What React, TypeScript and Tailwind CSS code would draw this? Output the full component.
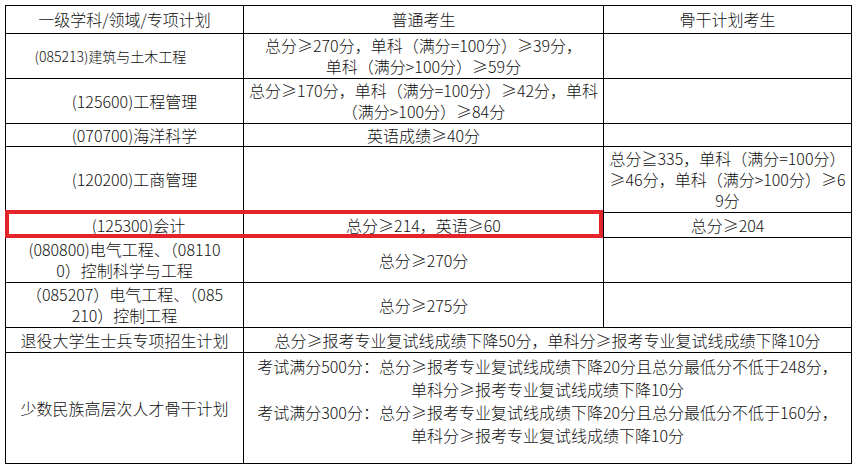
const td = 'border border-black p-0 text-center align-middle whitespace-nowrap'

type Row = {
  h: string
  name: React.ReactNode
  nameCls?: string
  normal?: React.ReactNode
  normalCls?: string
  backbone?: React.ReactNode
  span?: boolean
}

const rows: Row[] = [
  {
    h: 'h-[45px]',
    name: '(085213)建筑与土木工程',
    nameCls: 'text-[14px] pr-[28px]',
    normal: (
      <>
        总分≥270分，单科（满分=100分）≥39分，
        <br />
        单科（满分&gt;100分）≥59分
      </>
    ),
  },
  {
    h: 'h-[45px]',
    name: '(125600)工程管理',
    nameCls: 'pl-[20px]',
    normal: (
      <>
        总分≥170分，单科（满分=100分）≥42分，单科
        <br />
        （满分&gt;100分）≥84分
      </>
    ),
  },
  { h: 'h-[23px]', name: '(070700)海洋科学', nameCls: 'pl-[20px]', normal: '英语成绩≥40分' },
  {
    h: 'h-[66px]',
    name: '(120200)工商管理',
    nameCls: 'pl-[20px]',
    backbone: (
      <>
        总分≧335，单科（满分=100分）
        <br />
        ≥46分，单科（满分&gt;100分）≥6
        <br />
        9分
      </>
    ),
  },
  { h: 'h-[25px]', name: '(125300)会计', nameCls: 'pl-[28px]', normal: '总分≥214，英语≥60', backbone: '总分≥204' },
  {
    h: 'h-[45px]',
    name: (
      <>
        (080800)电气工程、（08110
        <br />
        0）控制科学与工程
      </>
    ),
    normal: '总分≥270分',
  },
  {
    h: 'h-[45px]',
    name: (
      <>
        （085207）电气工程、（085
        <br />
        210）控制工程
      </>
    ),
    normal: '总分≥275分',
  },
  {
    h: 'h-[25px]',
    name: '退役大学生士兵专项招生计划',
    span: true,
    normal: '总分≥报考专业复试线成绩下降50分，单科分≥报考专业复试线成绩下降10分',
  },
  {
    h: 'h-[111px]',
    name: '少数民族高层次人才骨干计划',
    span: true,
    normalCls: 'leading-[23px] pb-[14px]',
    normal: (
      <>
        考试满分500分：总分≥报考专业复试线成绩下降20分且总分最低分不低于248分，
        <br />
        单科分≥报考专业复试线成绩下降10分
        <br />
        考试满分300分：总分≥报考专业复试线成绩下降20分且总分最低分不低于160分，
        <br />
        单科分≥报考专业复试线成绩下降10分
      </>
    ),
  },
]

export default function App() {
  return (
    <div className="relative w-[857px] h-[467px] overflow-hidden bg-white pl-[5px] pt-[5px] font-['Noto_Sans_CJK_SC',sans-serif] text-[16px] leading-[21px] font-light text-[#111]">
      <table className="table-fixed border-collapse w-[846px]">
        <colgroup>
          <col className="w-[238px]" />
          <col className="w-[360px]" />
          <col className="w-[248px]" />
        </colgroup>
        <thead>
          <tr className="h-[28px]">
            <th className={`${td} font-light`}>一级学科/领域/专项计划</th>
            <th className={`${td} font-light`}>普通考生</th>
            <th className={`${td} font-light`}>骨干计划考生</th>
          </tr>
        </thead>
        <tbody>
          {rows.map((r, i) => (
            <tr key={i} className={r.h}>
              <td className={`${td} ${r.nameCls ?? ''}`}>{r.name}</td>
              {r.span ? (
                <td colSpan={2} className={`${td} ${r.normalCls ?? ''}`}>
                  {r.normal}
                </td>
              ) : (
                <>
                  <td className={`${td} ${r.normalCls ?? ''}`}>{r.normal}</td>
                  <td className={td}>{r.backbone}</td>
                </>
              )}
            </tr>
          ))}
        </tbody>
      </table>

      {/* red highlight over the 会计 row */}
      <div className="absolute left-[5px] top-[210px] w-[598px] h-[28px] border-4 border-[#e3242b]" />
    </div>
  )
}
